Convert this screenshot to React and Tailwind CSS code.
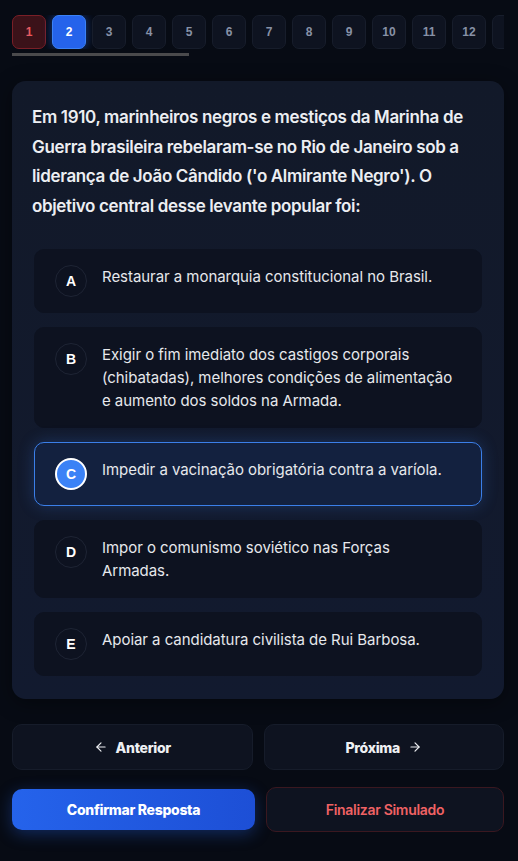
import React from "react";

const nums = Array.from({ length: 13 }, (_, i) => i + 1);

const options = [
  { l: "A", t: "Restaurar a monarquia constitucional no Brasil." },
  { l: "B", t: "Exigir o fim imediato dos castigos corporais (chibatadas), melhores condições de alimentação e aumento dos soldos na Armada." },
  { l: "C", t: "Impedir a vacinação obrigatória contra a varíola.", sel: true },
  { l: "D", t: "Impor o comunismo soviético nas Forças Armadas." },
  { l: "E", t: "Apoiar a candidatura civilista de Rui Barbosa." },
];

export default function App() {
  return (
    <div className="min-h-[861px] bg-[#070b14] pl-3 pr-[14px] pt-[15px] pb-8" style={{ fontFamily: "Inter, 'Noto Sans', sans-serif" }}>
      <div className="overflow-hidden">
        <div className="flex gap-[6px] w-max">
          {nums.map((n) => {
            let cls = "bg-[#0e1320] border-[#171d2b] text-[#8791a6]";
            if (n === 1) cls = "bg-[#3b1219] border-[#7a1f27] text-[#e85a60]";
            if (n === 2) cls = "bg-[#2563eb] border-[#3b82f6] text-white shadow-[0_0_10px_rgba(37,99,235,0.55)]";
            return (
              <div key={n} className={`w-[34px] h-[34px] shrink-0 rounded-[7px] border flex items-center justify-center text-[12px] font-bold ${cls}`} style={{ fontFamily: "'Liberation Sans', Arial, sans-serif" }}>
                {n < 13 ? n : ""}
              </div>
            );
          })}
        </div>
      </div>
      <div className="mt-[4px] h-[3px] w-[177px] bg-[#4a4a4c]" />

      <div className="mt-[25px] rounded-[14px] bg-gradient-to-b from-[#121929] to-[#121a2f] shadow-[0_4px_20px_rgba(0,0,0,0.4)] px-[20px] pt-[22px] pb-[23px]">
        <p className="text-[17px] leading-[29.5px] font-semibold text-[#eceef2] tracking-[-0.35px]">
          Em 1910, marinheiros negros e mestiços da Marinha de Guerra brasileira rebelaram-se no Rio de Janeiro sob a liderança de João Cândido ('o Almirante Negro'). O objetivo central desse levante popular foi:
        </p>
        <div className="mt-[28px] px-[2px] flex flex-col gap-[14px]">
          {options.map((o) => (
            <div
              key={o.l}
              className={`flex items-start gap-[15px] rounded-[10px] border px-[20px] py-[15px] ${
                o.sel
                  ? "bg-[#13213f] border-[#3b7fe8] shadow-[0_0_16px_rgba(59,130,246,0.25)]"
                  : "bg-[#0d1220] border-[#0d1220]"
              }`}
            >
              <div
                className={`w-[32px] h-[32px] shrink-0 rounded-full flex items-center justify-center text-[14px] font-bold text-white ${
                  o.sel ? "bg-[#3b82f6] border-2 border-white" : "bg-[#0d1220] border border-[#1e2434]"
                }`}
                style={{ fontFamily: "'Liberation Sans', Arial, sans-serif" }}
              >
                {o.l}
              </div>
              <div className="text-[15px] leading-[23px] text-[#e6e8ec] tracking-[-0.05px]">{o.t}</div>
            </div>
          ))}
        </div>
      </div>

      <div className="mt-[25px] grid grid-cols-2 gap-[11px]">
        <button className="h-[46px] rounded-[10px] bg-[#0e1320] border border-[#161c2a] text-[#eef0f3] text-[14px] font-extrabold flex items-center justify-center gap-[8px] tracking-[-0.3px]">
          <svg width="14" height="14" viewBox="0 0 24 24" fill="none" stroke="currentColor" strokeWidth="2" strokeLinecap="round" strokeLinejoin="round"><path d="M19 12H5" /><path d="M12 19l-7-7 7-7" /></svg>
          Anterior
        </button>
        <button className="h-[46px] rounded-[10px] bg-[#0e1320] border border-[#161c2a] text-[#eef0f3] text-[14px] font-extrabold flex items-center justify-center gap-[8px] tracking-[-0.3px]">
          Próxima
          <svg width="14" height="14" viewBox="0 0 24 24" fill="none" stroke="currentColor" strokeWidth="2" strokeLinecap="round" strokeLinejoin="round"><path d="M5 12h14" /><path d="M12 5l7 7-7 7" /></svg>
        </button>
      </div>

      <div className="mt-[17px] flex gap-[11px] items-center">
        <button className="w-[243px] h-[41px] rounded-[10px] bg-gradient-to-r from-[#2563eb] to-[#1d4fd6] text-white text-[14px] font-extrabold shadow-[0_4px_16px_rgba(37,99,235,0.35)] tracking-[-0.3px]">
          Confirmar Resposta
        </button>
        <button className="flex-1 h-[45px] rounded-[10px] bg-[#0e1320] border border-[#3a1820] text-[#f06264] text-[14px] font-semibold tracking-[-0.3px]">
          Finalizar Simulado
        </button>
      </div>
    </div>
  );
}
